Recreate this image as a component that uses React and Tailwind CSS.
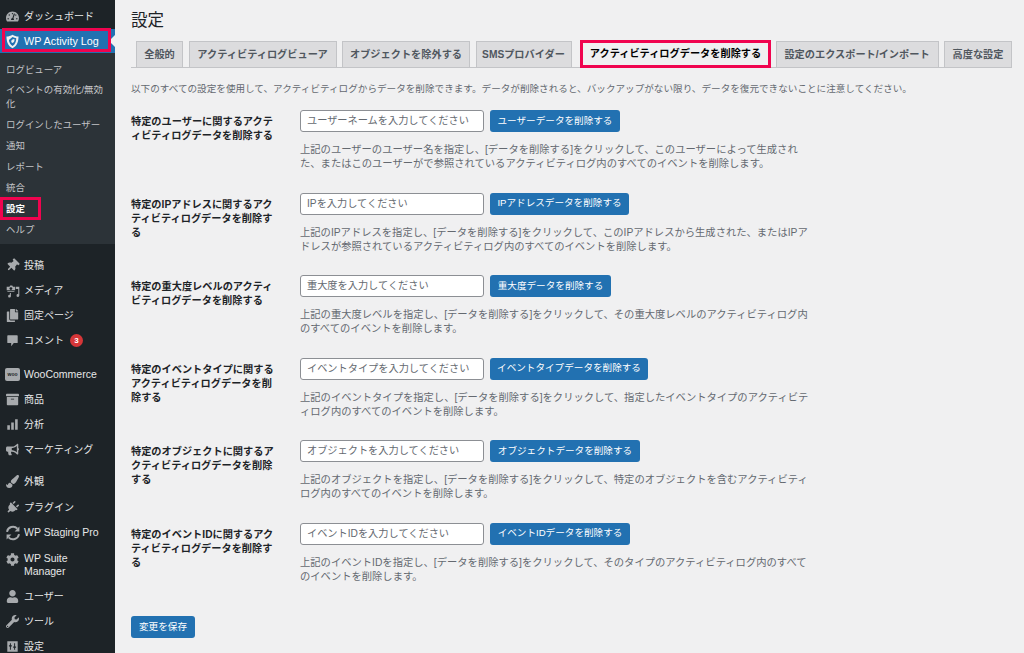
import React from "react";
import { FaThumbtack, FaPlug, FaCog, FaUser, FaWrench, FaCopy, FaArchive, FaPaintBrush, FaBullhorn, FaTachometerAlt } from "react-icons/fa";

const FONT = "[font-family:'Liberation_Sans','Noto_Sans_CJK_JP',sans-serif]";

const MediaIcon = () => (
  <svg viewBox="0 0 20 20" className="w-[14px] h-[14px]" fill="currentColor">
    <path d="M1 4h4l1-2h3l1 2h3v5H1z" />
    <circle cx="7" cy="6.500" r="2" fill="#1d2327" />
    <path d="M12 10V11H2V10zM14 4h5v12.500a2 2 0 1 1-1.500-2V7H14zM7 13v4.500a2 2 0 1 1-1.500-2V13z" />
  </svg>
);
const WooIcon = () => (
  <div className="relative w-[15px] h-[13px] rounded-[2px] bg-[#a7aaad] flex items-center justify-center text-[5px] font-bold text-[#1d2327] leading-none">woo</div>
);
const BarsIcon = () => (
  <svg viewBox="0 0 20 20" className="w-[13px] h-[13px]" fill="currentColor">
    <path d="M2 11h4v7H2zM8 7h4v11H8zM14 2h4v16h-4z" />
  </svg>
);
const CommentIcon = () => (
  <svg viewBox="0 0 20 20" className="w-[13px] h-[13px]" fill="currentColor">
    <path d="M3 2h14a1 1 0 0 1 1 1v10a1 1 0 0 1-1 1h-5l-4 5v-5H3a1 1 0 0 1-1-1V3a1 1 0 0 1 1-1z" />
  </svg>
);
const SyncIcon = () => (
  <svg viewBox="0 0 20 20" className="w-[16px] h-[16px]" fill="currentColor">
    <path d="M2.500 8.500A7.600 7.600 0 0 1 15.500 4.500" fill="none" stroke="currentColor" strokeWidth="2.400" />
    <path d="M17.500 11.500A7.600 7.600 0 0 1 4.500 15.500" fill="none" stroke="currentColor" strokeWidth="2.400" />
    <path d="M18 2v6h-6zM2 18v-6h6z" />
  </svg>
);
const SlidersIcon = () => (
  <svg viewBox="0 0 20 20" className="w-[13px] h-[13px]" fill="currentColor">
    <path fillRule="evenodd" d="M2 2h16v16H2zM6 5v3H4.500v2H6v5h1.500v-5H9V8H7.500V5zM12.500 5v5H11v2h1.500v3H14v-3h1.500v-2H14V5z" />
  </svg>
);
const ShieldIcon = () => (
  <svg viewBox="0 0 20 20" className="w-[15px] h-[15px]">
    <path d="M10 1c2.500 1.600 5 2.300 8 2.400 0 7-2 12.600-8 15.600C4 16 2 10.400 2 3.400 5 3.300 7.500 2.600 10 1z" fill="#f0f0f1" />
    <path d="M10 4c1.700 1 3.400 1.500 5 1.600 0 4.500-1.500 8.400-5 10.400C7 14 5.500 11 5.200 8z" fill="#2271b1" />
    <path d="M12.500 6.500c.5 2.500-.5 5-3 5.500-1.500-1-1.500-2.500-.5-4 1-1 2.200-1.500 3.500-1.500z" fill="#f0f0f1" />
  </svg>
);

const sz = { className: "w-[13px] h-[13px]" };
const tilt = { className: "w-[13px] h-[13px] rotate-45" };
const Menu = ({ icon, children, h = "h-[25px]", extra, top, latin }) => (
  <div className={`${h} flex ${top ? "items-start" : "items-center"} text-[#e6e7e8] ${latin ? "text-[10.500px]" : "text-[10px]"} leading-[13px]`}>
    <div className={`w-[24px] flex justify-center text-[#a7aaad] shrink-0 pl-[1px] ${top ? "pt-[1px]" : ""}`}>{icon}</div>
    <div>{children}</div>
    {extra}
  </div>
);

const Sub = ({ children, h = "h-[21px]", b }) => (
  <div className={`${h} pl-[6px] pr-[8px] flex items-center text-[9.450px] leading-[14px] ${b ? "text-white font-bold" : "text-[#c3c4c7]"}`}>
    <span>{children}</span>
  </div>
);

const Sidebar = () => (
  <aside className="w-[115px] shrink-0 bg-[#1d2327] h-[653px] overflow-hidden relative">
    <div className="pt-[4px]">
      <Menu icon={<FaTachometerAlt {...sz} />}>ダッシュボード</Menu>
    </div>
    <div className="relative h-[24px] bg-[#2271b1] flex items-center text-white text-[10.800px]">
      <div className="w-[24px] flex justify-center pl-[1px]"><ShieldIcon /></div>
      <div>WP Activity Log</div>
      <div className="absolute right-0 top-[6px] w-0 h-0 border-y-[6px] border-y-transparent border-r-[6px] border-r-[#f0f0f1]"></div>
      <div className="absolute left-[2px] top-[-1px] w-[109px] h-[24px] border-[3px] border-[#f0044f]"></div>
    </div>
    <div className="bg-[#2c3338] pt-[6px] h-[191px]">
      <Sub>ログビューア</Sub>
      <Sub h="h-[34px]">イベントの有効化/無効化</Sub>
      <Sub>ログインしたユーザー</Sub>
      <Sub>通知</Sub>
      <Sub>レポート</Sub>
      <Sub>統合</Sub>
      <div className="relative">
        <Sub b>設定</Sub>
        <div className="absolute left-0 top-[-1px] w-[41px] h-[23px] border-[3px] border-[#f0044f]"></div>
      </div>
      <Sub>ヘルプ</Sub>
    </div>
    <div className="pt-[9px]">
      <Menu icon={<FaThumbtack {...tilt} />}>投稿</Menu>
      <Menu icon={<MediaIcon />}>メディア</Menu>
      <Menu icon={<FaCopy {...sz} />}>固定ページ</Menu>
      <Menu icon={<CommentIcon />} extra={<span className="ml-[6px] w-[13px] h-[13px] rounded-full bg-[#d63638] text-white text-[8px] font-bold flex items-center justify-center">3</span>}>コメント</Menu>
    </div>
    <div className="pt-[9px]">
      <Menu latin h="h-[24.500px]" icon={<WooIcon />}>WooCommerce</Menu>
      <Menu icon={<FaArchive {...sz} />}>商品</Menu>
      <Menu icon={<BarsIcon />}>分析</Menu>
      <Menu icon={<FaBullhorn {...sz} />}>マーケティング</Menu>
    </div>
    <div className="pt-[7.500px]">
      <Menu h="h-[25.500px]" icon={<FaPaintBrush {...sz} />}>外観</Menu>
      <Menu h="h-[25.500px]" icon={<FaPlug {...tilt} />}>プラグイン</Menu>
      <Menu latin h="h-[25.500px]" icon={<SyncIcon />}>WP Staging Pro</Menu>
      <Menu latin icon={<FaCog {...sz} />} h="h-[38.500px] pt-[6px]" top>WP Suite<br />Manager</Menu>
      <Menu icon={<FaUser {...sz} />}>ユーザー</Menu>
      <Menu icon={<FaWrench {...sz} />}>ツール</Menu>
      <Menu icon={<SlidersIcon />}>設定</Menu>
    </div>
  </aside>
);

const tabs = [
  ["全般的", "w-[47px]"],
  ["アクティビティログビューア", "w-[148px]"],
  ["オブジェクトを除外する", "w-[128px]"],
  ["SMSプロバイダー", "w-[96px]"],
];
const tabs2 = [
  ["設定のエクスポート/インポート", "w-[163px]"],
  ["高度な設定", "w-[68px]"],
];
const Tab = ({ label, w }) => (
  <div className={`${w} h-[26px] flex items-center justify-center bg-[#dcdcde] border border-[#c3c4c7] border-b-0 text-[#50575e] text-[10.200px] font-bold whitespace-nowrap`}>{label}</div>
);

const rows = [
  { th: "特定のユーザーに関するアクティビティログデータを削除する", ph: "ユーザーネームを入力してください", btn: "ユーザーデータを削除する", w: "w-[130px]", d: "上記のユーザーのユーザー名を指定し、[データを削除する]をクリックして、このユーザーによって生成された、またはこのユーザーがで参照されているアクティビティログ内のすべてのイベントを削除します。" },
  { th: "特定のIPアドレスに関するアクティビティログデータを削除する", ph: "IPを入力してください", btn: "IPアドレスデータを削除する", w: "w-[139px]", d: "上記のIPアドレスを指定し、[データを削除する]をクリックして、このIPアドレスから生成された、またはIPアドレスが参照されているアクティビティログ内のすべてのイベントを削除します。" },
  { th: "特定の重大度レベルのアクティビティログデータを削除する", ph: "重大度を入力してください", btn: "重大度データを削除する", w: "w-[121px]", d: "上記の重大度レベルを指定し、[データを削除する]をクリックして、その重大度レベルのアクティビティログ内のすべてのイベントを削除します。" },
  { th: "特定のイベントタイプに関するアクティビティログデータを削除する", ph: "イベントタイプを入力してください", btn: "イベントタイプデータを削除する", w: "w-[158px]", d: "上記のイベントタイプを指定し、[データを削除する]をクリックして、指定したイベントタイプのアクティビティログ内のすべてのイベントを削除します。" },
  { th: "特定のオブジェクトに関するアクティビティログデータを削除する", ph: "オブジェクトを入力してください", btn: "オブジェクトデータを削除する", w: "w-[150px]", d: "上記のオブジェクトを指定し、[データを削除する]をクリックして、特定のオブジェクトを含むアクティビティログ内のすべてのイベントを削除します。" },
  { th: "特定のイベントIDに関するアクティビティログデータを削除する", ph: "イベントIDを入力してください", btn: "イベントIDデータを削除する", w: "w-[140px]", d: "上記のイベントIDを指定し、[データを削除する]をクリックして、そのタイプのアクティビティログ内のすべてのイベントを削除します。" },
];

const Row = ({ r }) => (
  <div className="flex h-[82.500px]">
    <div className="w-[169px] shrink-0 pr-[20px] pt-[5px] text-[10.200px] leading-[14px] font-bold text-[#1d2327]">{r.th}</div>
    <div>
      <div className="flex gap-[6px]">
        <div className="w-[184px] h-[22px] bg-white border border-[#8c8f94] rounded-[3px] px-[6px] flex items-center text-[10.200px] text-[#646970] whitespace-nowrap overflow-hidden">{r.ph}</div>
        <div className={`${r.w} h-[22px] bg-[#2271b1] rounded-[3px] flex items-center justify-center text-white text-[9.600px] whitespace-nowrap`}>{r.btn}</div>
      </div>
      <p className="w-[513px] mt-[11px] text-[10.300px] leading-[14px] text-[#646970]">{r.d}</p>
    </div>
  </div>
);

export default function App() {
  return (
    <div className={`flex w-[1024px] h-[653px] overflow-hidden bg-[#f0f0f1] ${FONT}`}>
      <Sidebar />
      <main className="flex-1 pl-[16px] pr-[12px]">
        <h1 className="pt-[10px] text-[16.500px] leading-[20px] text-[#1d2327]">設定</h1>
        <div className="mt-[11px] h-[27px] flex border-b border-[#c3c4c7] pl-[5px] gap-[5.500px] items-end">
          {tabs.map(([l, w]) => <Tab key={l} label={l} w={w} />)}
          <div className="relative ml-[4px] w-[189px] h-[27px] flex items-center justify-center bg-[#f0f0f1] text-black text-[10.200px] font-bold whitespace-nowrap">
            アクティビティログデータを削除する
            <div className="absolute left-[-1px] top-0 w-[191px] h-[28px] border-[3px] border-[#f0044f]"></div>
          </div>
          {tabs2.map(([l, w]) => <Tab key={l} label={l} w={w} />)}
        </div>
        <p className="mt-[14px] text-[9.600px] leading-[14px] text-[#646970] whitespace-nowrap">以下のすべての設定を使用して、アクティビティログからデータを削除できます。データが削除されると、バックアップがない限り、データを復元できないことに注意してください。</p>
        <div className="mt-[14px]">
          {rows.map((r) => <Row key={r.btn} r={r} />)}
        </div>
        <div className="mt-[11px] w-[64px] h-[22px] bg-[#2271b1] rounded-[3px] flex items-center justify-center text-white text-[9.600px]">変更を保存</div>
      </main>
    </div>
  );
}
